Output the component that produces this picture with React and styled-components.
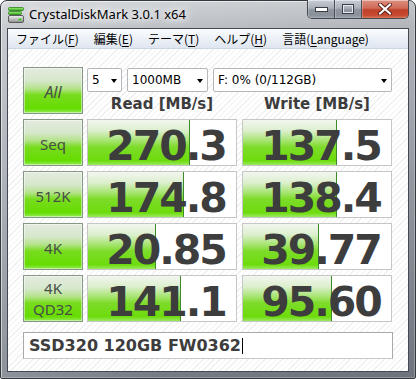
import React from "react";
import styled, { createGlobalStyle } from "styled-components";

const Global = createGlobalStyle`
  html, body { margin: 0; padding: 0; background: #ffffff; }
  body { width: 416px; height: 379px; overflow: hidden; }
`;

const Window = styled.div`
  box-sizing: border-box;
  width: 416px;
  height: 379px;
  display: flex;
  flex-direction: column;
  padding: 0 6px 6px;
  border: 1px solid #343940;
  border-radius: 7px 7px 2px 2px;
  background:
    linear-gradient(to right, rgba(255,255,255,0.18), rgba(255,255,255,0) 40%, rgba(0,0,0,0.06)),
    linear-gradient(to bottom, #d0d3d7 0px, #bdc1c6 26px, #a5aab2 140px, #747b85 100%);
  box-shadow: inset 1px 1px 0 rgba(255,255,255,0.55), inset -1px -1px 0 rgba(255,255,255,0.25);
`;

const TitleBar = styled.div`
  display: flex;
  align-items: flex-start;
  height: 27px;
  padding-left: 1px;
`;

const AppIcon = styled.svg`
  margin-top: 6px;
  flex: none;
`;

const TitleText = styled.div`
  flex: 1;
  margin-left: 5px;
  padding-top: 4px;
  font-family: "Noto Sans", sans-serif;
  font-size: 13px;
  line-height: 18px;
  color: #000;
  text-shadow: 0 0 6px #fff, 0 0 10px #fff, 0 0 14px rgba(255,255,255,0.9);
  white-space: nowrap;
`;

const Caption = styled.div`
  display: flex;
  margin-top: -1px;
  height: 19px;
  box-sizing: border-box;
  border: 1px solid #454a52;
  border-top: none;
  border-radius: 0 0 5px 5px;
  overflow: hidden;
`;

const CapButton = styled.div`
  box-sizing: border-box;
  width: ${(p) => p.$w}px;
  height: 100%;
  display: flex;
  align-items: center;
  justify-content: center;
  border-left: ${(p) => (p.$first ? "none" : "1px solid #4a5059")};
  background: ${(p) =>
    p.$close
      ? "linear-gradient(to bottom, #dc8e80 0%, #cf6b58 45%, #c0402a 55%, #c64a30 85%, #d67a5c 100%)"
      : "linear-gradient(to bottom, #c9ced5 0%, #aab0b8 45%, #8d949e 55%, #8a919b 85%, #a4abb4 100%)"};
  box-shadow: inset 0 1px 0 rgba(255,255,255,0.45), inset 1px 0 0 rgba(255,255,255,0.25);
`;

const Client = styled.div`
  flex: 1;
  display: flex;
  flex-direction: column;
  border: 1px solid #434952;
  background: repeating-linear-gradient(135deg, #ffffff 0px, #ffffff 3px, #f0f0f0 3px, #f0f0f0 4px);
`;

const MenuBar = styled.div`
  box-sizing: border-box;
  height: 20px;
  display: flex;
  align-items: center;
  gap: 15px;
  padding-left: 8px;
  background: linear-gradient(to bottom, #fbfcfe 0%, #eef2f8 45%, #dfe6f0 100%);
  border-bottom: 1px solid #cdd5e0;
  font-family: "Noto Sans CJK JP", "Noto Sans", sans-serif;
  font-size: 12px;
  line-height: 20px;
  color: #000;
`;

const MenuItem = styled.span`
  white-space: nowrap;
  u { text-decoration: underline; text-underline-offset: 2px; }
`;

const Body = styled.div`
  flex: 1;
  display: flex;
  flex-direction: column;
  padding: 18px 15px 0 15px;
`;

const Line = styled.div`
  display: flex;
  gap: 4px;
  margin-top: ${(p) => p.$top || 0}px;
`;

const GreenButton = styled.div`
  box-sizing: border-box;
  width: 60px;
  height: 47px;
  flex: none;
  display: flex;
  flex-direction: column;
  align-items: center;
  justify-content: center;
  padding-top: ${(p) => (p.$two ? 0 : 4)}px;
  border: 1px solid #879787;
  background: linear-gradient(to bottom, #e3ebdf 0%, #d6e7cb 28%, #b4e38a 46%, #78dc1e 60%, #66dc00 90%, #94ea58 100%);
  box-shadow: inset 0 0 0 1px rgba(255,255,255,0.45);
  font-family: "Noto Sans", sans-serif;
  font-size: ${(p) => (p.$big ? 16 : 15)}px;
  font-style: ${(p) => (p.$big ? "italic" : "normal")};
  line-height: 21px;
  color: #474e46;
`;

const TopRight = styled.div`
  display: flex;
  flex-direction: column;
  width: 305px;
`;

const ComboRow = styled.div`
  display: flex;
  gap: 5px;
  margin-top: 1px;
  height: 24px;
`;

const Combo = styled.div`
  box-sizing: border-box;
  width: ${(p) => p.$w}px;
  height: 24px;
  display: flex;
  align-items: center;
  justify-content: space-between;
  padding: 0 4px 0 4px;
  border: 1px solid #b4b7bc;
  border-radius: 2px;
  background: #ffffff;
  font-family: "DejaVu Sans", sans-serif;
  font-size: 12px;
  color: #000;
  white-space: nowrap;
`;

const Arrow = styled.span`
  width: 0;
  height: 0;
  border-left: 3.5px solid transparent;
  border-right: 3.5px solid transparent;
  border-top: 4px solid #000;
  margin-top: 1px;
`;

const Pair = styled.div`
  display: grid;
  grid-template-columns: 150px 150px;
  column-gap: 5px;
`;

const Header = styled.div`
  height: 22px;
  box-sizing: border-box;
  padding-top: 3px;
  text-align: center;
  font-family: "DejaVu Sans", sans-serif;
  font-weight: bold;
  font-size: 15px;
  line-height: 19px;
  color: #3c3c3c;
  white-space: nowrap;
`;

const Cell = styled.div`
  position: relative;
  box-sizing: border-box;
  height: 47px;
  display: flex;
  align-items: flex-start;
  justify-content: center;
  padding: 7px 0 0 8px;
  border: 1px solid #c6c6c6;
  background: #ffffff;
`;

const Fill = styled.div`
  position: absolute;
  left: 0;
  top: 0;
  bottom: 0;
  box-sizing: border-box;
  border-right: 1px solid #3d8a2a;
  background: linear-gradient(to bottom, #f3f6f0 0%, #dcefcd 24%, #a6e470 46%, #7ddc2a 60%, #6ddb0c 90%, #9ae960 100%);
`;

const Value = styled.span`
  position: relative;
  font-family: "DejaVu Sans", sans-serif;
  font-weight: bold;
  font-size: 41px;
  line-height: 38px;
  letter-spacing: -2px;
  color: #3d3d3d;
  white-space: nowrap;
`;

const Comment = styled.div`
  box-sizing: border-box;
  margin-top: 10px;
  height: 27px;
  display: flex;
  align-items: center;
  padding-left: 5px;
  border: 1px solid #a9a9a9;
  border-bottom-color: #c8c8c8;
  background: #ffffff;
  font-family: "DejaVu Sans", sans-serif;
  font-weight: bold;
  font-size: 16px;
  color: #3d3d3d;
  white-space: nowrap;
`;

const Caret = styled.span`
  display: inline-block;
  width: 1px;
  height: 16px;
  margin-left: 1px;
  background: #000;
`;

const rows = [
  { label: ["Seq"], read: "270.3", rw: 102, write: "137.5", ww: 94 },
  { label: ["512K"], read: "174.8", rw: 96, write: "138.4", ww: 94 },
  { label: ["4K"], read: "20.85", rw: 68, write: "39.77", ww: 76 },
  { label: ["4K", "QD32"], read: "141.1", rw: 93, write: "95.60", ww: 89 },
];

function ResultCell({ value, width }) {
  return (
    <Cell>
      <Fill style={{ width }} />
      <Value>{value}</Value>
    </Cell>
  );
}

export default function App() {
  return (
    <>
      <Global />
      <Window>
        <TitleBar>
          <AppIcon width="16" height="16" viewBox="0 0 16 16">
            <defs>
              <linearGradient id="gg" x1="0" y1="0" x2="0" y2="1">
                <stop offset="0" stopColor="#a6f57a" />
                <stop offset="1" stopColor="#2fa61e" />
              </linearGradient>
              <linearGradient id="gd" x1="0" y1="0" x2="0" y2="1">
                <stop offset="0" stopColor="#f4f4f4" />
                <stop offset="1" stopColor="#8c8c8c" />
              </linearGradient>
            </defs>
            <rect x="0.5" y="0.5" width="15" height="3" rx="1" fill="url(#gg)" stroke="#2b7d1c" strokeWidth="0.8" />
            <rect x="0.5" y="4.5" width="13" height="3" rx="1" fill="url(#gg)" stroke="#2b7d1c" strokeWidth="0.8" />
            <rect x="0.5" y="8.5" width="15" height="7" rx="1.5" fill="url(#gd)" stroke="#5a5a5a" strokeWidth="1" />
            <rect x="10.5" y="11.5" width="3" height="2" fill="#39d11c" />
          </AppIcon>
          <TitleText>CrystalDiskMark 3.0.1 x64</TitleText>
          <Caption>
            <CapButton $w={26} $first>
              <svg width="13" height="5" viewBox="0 0 13 5">
                <rect x="0.5" y="0.5" width="12" height="4" fill="#ffffff" stroke="#3a3f47" />
              </svg>
            </CapButton>
            <CapButton $w={27}>
              <svg width="12" height="10" viewBox="0 0 12 10">
                <rect x="1" y="1" width="10" height="8" fill="none" stroke="#3a3f47" strokeWidth="2" />
                <rect x="1.5" y="1.5" width="9" height="7" fill="none" stroke="#e6e8eb" strokeWidth="1" />
              </svg>
            </CapButton>
            <CapButton $w={47} $close>
              <svg width="14" height="12" viewBox="0 0 14 12">
                <path d="M2 1.5 L12 10.5 M12 1.5 L2 10.5" stroke="#5a2018" strokeWidth="4" strokeLinecap="round" />
                <path d="M2 1.5 L12 10.5 M12 1.5 L2 10.5" stroke="#ffffff" strokeWidth="2.2" strokeLinecap="round" />
              </svg>
            </CapButton>
          </Caption>
        </TitleBar>
        <Client>
          <MenuBar>
            <MenuItem>ファイル(<u>F</u>)</MenuItem>
            <MenuItem>編集(<u>E</u>)</MenuItem>
            <MenuItem>テーマ(<u>T</u>)</MenuItem>
            <MenuItem>ヘルプ(<u>H</u>)</MenuItem>
            <MenuItem>言語(<u>L</u>anguage)</MenuItem>
          </MenuBar>
          <Body>
            <Line>
              <GreenButton $big>All</GreenButton>
              <TopRight>
                <ComboRow>
                  <Combo $w={35}>
                    <span>5</span>
                    <Arrow />
                  </Combo>
                  <Combo $w={81}>
                    <span>1000MB</span>
                    <Arrow />
                  </Combo>
                  <Combo $w={179}>
                    <span>F: 0% (0/112GB)</span>
                    <Arrow />
                  </Combo>
                </ComboRow>
                <Pair>
                  <Header>Read [MB/s]</Header>
                  <Header>Write [MB/s]</Header>
                </Pair>
              </TopRight>
            </Line>
            {rows.map((r, i) => (
              <Line key={i} $top={5}>
                <GreenButton $two={r.label.length > 1}>
                  {r.label.map((t) => (
                    <span key={t}>{t}</span>
                  ))}
                </GreenButton>
                <Pair>
                  <ResultCell value={r.read} width={r.rw} />
                  <ResultCell value={r.write} width={r.ww} />
                </Pair>
              </Line>
            ))}
            <Comment>
              SSD320 120GB FW0362
              <Caret />
            </Comment>
          </Body>
        </Client>
      </Window>
    </>
  );
}
